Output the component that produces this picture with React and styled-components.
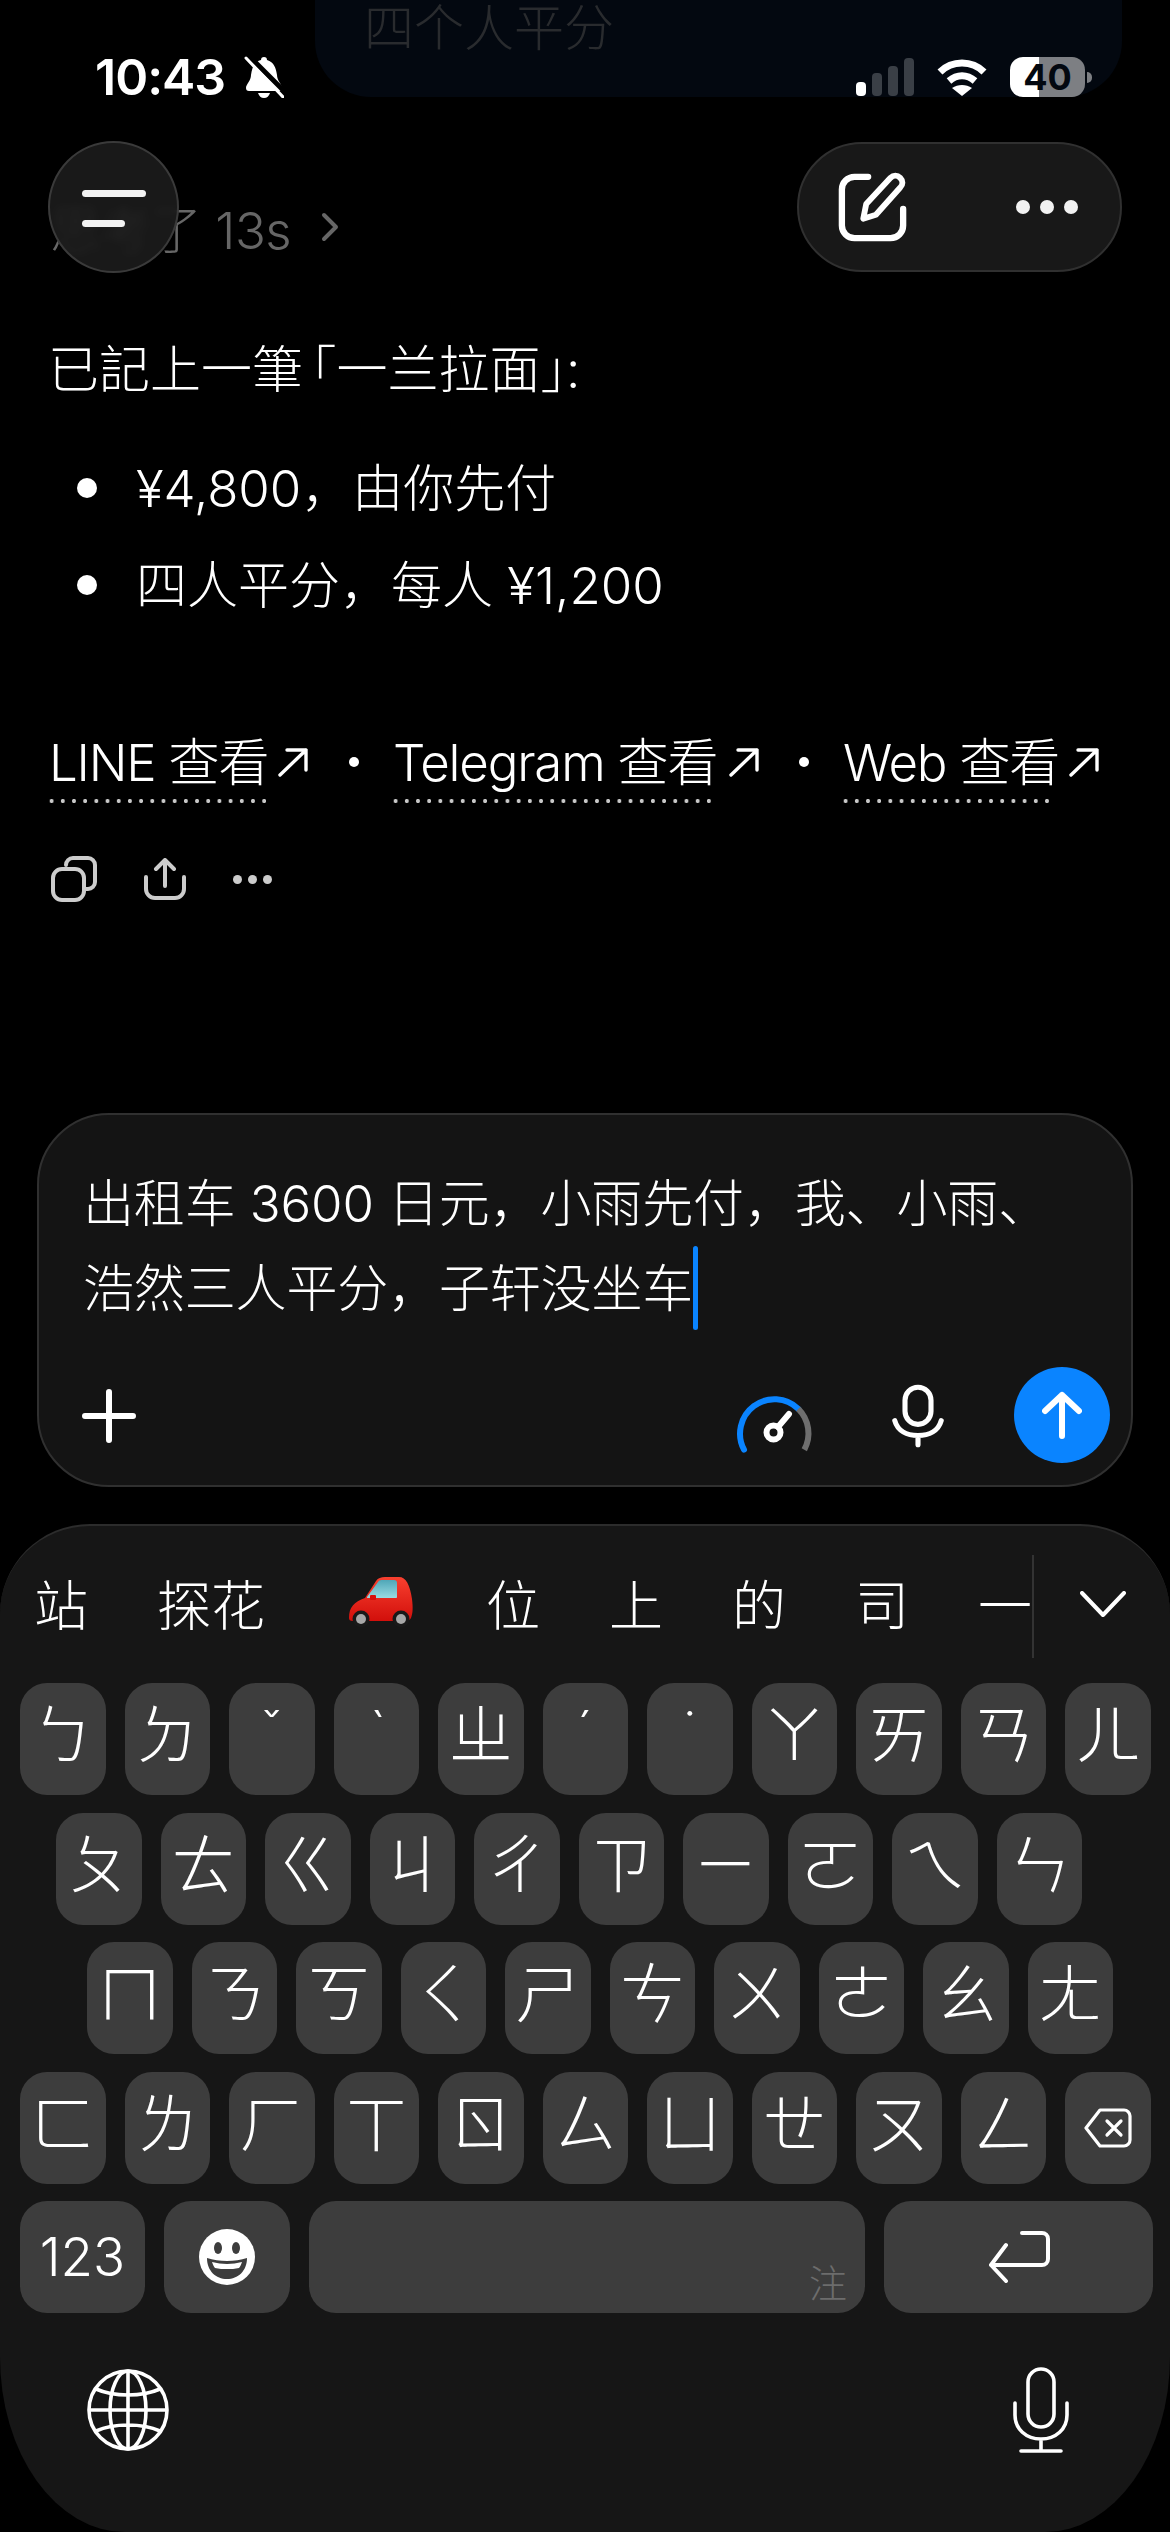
import React from "react";
import styled, { createGlobalStyle } from "styled-components";

const GlobalStyle = createGlobalStyle`
html, body { margin:0; padding:0; background:#000; }
* { box-sizing:border-box; }
`;

const sans = `Inter, "Noto Sans CJK SC", "Noto Sans CJK TC", sans-serif`;

const Page = styled.div`
position:relative;
width:1170px;
height:2532px;
overflow:hidden;
display:flex;
flex-direction:column;
background:#000;
color:#fff;
font-family:${sans};
font-weight:300;
`;

const PeekBubble = styled.div`
position:absolute;
top:0;
left:315px;
width:807px;
height:97px;
padding-left:49px;
background:#030810;
border-radius:0 0 56px 56px;
color:#292b2e;
font-size:50px;
line-height:56px;
`;

const StatusBar = styled.div`
position:absolute;
top:57px;
left:95px;
right:85px;
height:40px;
display:flex;
align-items:center;
`;

const Time = styled.span`
font-size:50px;
font-weight:600;
letter-spacing:-1px;
line-height:40px;
margin-right:19px;
`;

const StatusRight = styled.div`
margin-left:auto;
display:flex;
align-items:center;
gap:23px;
`;

const Battery = styled.div`
position:relative;
width:75px;
height:40px;
border-radius:13px;
background:linear-gradient(90deg,#fff 39%,#7d7f83 39%);
color:#030810;
font-size:36px;
font-weight:700;
line-height:40px;
text-align:center;
&::after {
  content:"";
  position:absolute;
  right:-7px;
  top:15px;
  width:5px;
  height:11px;
  border-radius:0 5px 5px 0;
  background:#7d7f83;
}
`;

const TopBar = styled.div`
position:absolute;
top:141px;
left:48px;
right:48px;
display:flex;
justify-content:space-between;
align-items:flex-start;
`;

const MenuButton = styled.div`
width:131px;
height:132px;
border-radius:50%;
padding:47px 0 0 32px;
background:rgba(28,28,28,.88);
border:2px solid #3a3a3a;
backdrop-filter:blur(4px);
display:flex;
flex-direction:column;
gap:23px;
`;

const MenuLine = styled.span`
display:block;
width:${p => p.$w}px;
height:7px;
border-radius:4px;
background:#f2f2f2;
`;

const ActionPill = styled.div`
width:325px;
height:130px;
margin-top:1px;
border-radius:65px;
padding:0 42px 0 39px;
background:#181818;
border:2px solid #303030;
display:flex;
align-items:center;
justify-content:space-between;
`;

const Chat = styled.main`
flex:1;
padding:197px 50px 0;
font-size:51px;
`;

const Thought = styled.div`
height:60px;
display:flex;
align-items:center;
gap:30px;
color:#666;
font-size:51px;
letter-spacing:-.5px;
`;

const Para = styled.p`
margin:73px 0 0 -2px;
line-height:80px;
`;

const Bracket = styled.span`
font-feature-settings:"halt";
margin-left:${p => p.$left || 0}px;
`;

const List = styled.ul`
list-style:none;
margin:30px 0 0;
padding:0 0 0 86px;
`;

const Item = styled.li`
position:relative;
height:97px;
line-height:97px;
&::before {
  content:"";
  position:absolute;
  left:-59px;
  top:38px;
  width:20px;
  height:20px;
  border-radius:50%;
  background:#fff;
}
`;

const Links = styled.div`
margin:94px 0 0 -4px;
height:76px;
display:flex;
align-items:flex-start;
`;

const LinkLabel = styled.span`
flex:none;
height:76px;
padding:0 0 0 3px;
line-height:70px;
letter-spacing:-1.2px;
white-space:nowrap;
width:${p => p.$w}px;
background-image:radial-gradient(circle,#c8c8c8 1.8px,transparent 2.3px);
background-size:11.2px 6px;
background-position:left bottom;
background-repeat:repeat-x;
`;

const LinkArrow = styled.svg`
width:30px;
height:30px;
margin:19px 0 0 ${p => p.$left}px;
flex:none;
`;

const LinkDot = styled.span`
flex:none;
width:10px;
height:10px;
margin:29px ${p => p.$right}px 0 ${p => p.$left}px;
border-radius:50%;
background:#fff;
`;

const Actions = styled.div`
margin-top:52px;
padding-left:1px;
height:46px;
display:flex;
align-items:center;
gap:47px;
`;

const Composer = styled.section`
margin:0 37px;
height:374px;
flex:none;
padding:46px 21px 22px 44px;
background:#141414;
border:2px solid #303030;
border-radius:72px;
display:flex;
flex-direction:column;
`;

const Draft = styled.div`
flex:1;
font-size:51px;
letter-spacing:-.15px;
line-height:85px;
white-space:nowrap;
`;

const Caret = styled.span`
display:inline-block;
width:5px;
height:84px;
vertical-align:top;
background:#0a84ff;
border-radius:3px;
`;

const Tools = styled.div`
height:96px;
display:flex;
align-items:center;
`;

const Send = styled.div`
width:96px;
height:96px;
border-radius:50%;
background:#0a84ff;
display:flex;
align-items:center;
justify-content:center;
`;

const Keyboard = styled.section`
margin-top:37px;
height:1008px;
flex:none;
background:#161616;
border-top:2px solid #2c2c2c;
border-radius:90px 90px 125px 125px / 90px 90px 175px 175px;
display:flex;
flex-direction:column;
`;

const CandidateBar = styled.div`
height:157px;
padding:29px 0 0 34px;
display:flex;
align-items:flex-start;
`;

const Candidates = styled.div`
width:1000px;
height:103px;
padding-bottom:8px;
display:flex;
align-items:center;
gap:69px;
font-size:54px;
white-space:nowrap;
border-right:2px solid #333;
`;

const Collapse = styled.svg`
margin:36px 0 0 46px;
flex:none;
`;

const KeyRows = styled.div`
display:flex;
flex-direction:column;
gap:17.5px;
`;

const KeyRow = styled.div`
padding-left:${p => p.$inset}px;
display:flex;
gap:19px;
`;

const Key = styled.div`
width:${p => p.$w || 85.5}px;
height:112px;
flex:none;
border-radius:27px;
background:#3d3d3d;
display:flex;
align-items:center;
justify-content:center;
font-size:${p => p.$size || 64}px;
line-height:100px;
padding-bottom:${p => (p.$flat ? 0 : 8)}px;
`;

const ToneKey = styled(Key)`
align-items:flex-start;
padding-bottom:0;
font-size:50px;
line-height:94px;
`;

const SpaceKey = styled(Key)`
justify-content:flex-end;
align-items:flex-end;
padding:0 18px 8px 0;
color:#6c6c6c;
font-size:38px;
line-height:44px;
`;

const BottomRow = styled.div`
margin-top:54px;
padding:0 101px 0 87px;
display:flex;
justify-content:space-between;
align-items:center;
`;

const row1 = ["ㄅ", "ㄉ", "ˇ", "ˋ", "ㄓ", "ˊ", "˙", "ㄚ", "ㄞ", "ㄢ", "ㄦ"];
const row2 = ["ㄆ", "ㄊ", "ㄍ", "ㄐ", "ㄔ", "ㄗ", "ㄧ", "ㄛ", "ㄟ", "ㄣ"];
const row3 = ["ㄇ", "ㄋ", "ㄎ", "ㄑ", "ㄕ", "ㄘ", "ㄨ", "ㄜ", "ㄠ", "ㄤ"];
const row4 = ["ㄈ", "ㄌ", "ㄏ", "ㄒ", "ㄖ", "ㄙ", "ㄩ", "ㄝ", "ㄡ", "ㄥ"];
const tones = ["ˇ", "ˋ", "ˊ", "˙"];

const line = { fill: "none", stroke: "#fff", strokeLinecap: "round", strokeLinejoin: "round" };

const BellSlash = () => (
  <svg width="40" height="42" viewBox="0 0 40 42">
    <path fill="#fff" d="M20 1c2 0 3 1 3 3 7 2 9 8 10 15 0 6 5 9 5 13 0 2-1 3-3 3H5c-2 0-3-1-3-3 0-4 5-7 5-13 1-7 3-13 10-15 0-2 1-3 3-3z" />
    <path fill="#fff" d="M14 37h12c-1 3-3 5-6 5s-5-2-6-5z" />
    <path stroke="#000" strokeWidth="5" d="M4 -1 L42 37" />
    <path stroke="#fff" strokeWidth="3" strokeLinecap="round" d="M2 2 L39 41" />
  </svg>
);

const Signal = () => (
  <svg width="58" height="38" viewBox="0 0 58 38">
    <rect x="0" y="24" width="10" height="14" rx="4" fill="#fff" />
    <rect x="16" y="15" width="10" height="23" rx="4" fill="#3a3f46" />
    <rect x="32" y="8" width="10" height="30" rx="4" fill="#3a3f46" />
    <rect x="48" y="0" width="10" height="38" rx="4" fill="#3a3f46" />
  </svg>
);

const Wifi = () => (
  <svg width="50" height="37" viewBox="0 0 50 37">
    <path fill="none" stroke="#fff" strokeWidth="7" d="M3 13C15 1 35 1 47 13" />
    <path fill="none" stroke="#fff" strokeWidth="7" d="M12 22c8-7 18-7 26 0" />
    <path fill="#fff" d="M15 29c6-4 14-4 20 0L25 37z" />
  </svg>
);

const ComposeIcon = () => (
  <svg width="70" height="70" viewBox="0 0 72 72">
    <path {...line} strokeWidth="6.5" d="M31 5H17A13 13 0 0 0 4 18v37a13 13 0 0 0 13 13h37a13 13 0 0 0 13-13V38" />
    <path {...line} strokeWidth="6" d="M26 48l3-15L54 6c3-3 7-3 10 0s3 7 0 10L39 44z" />
  </svg>
);

const MoreDots = ({ r, gap, fill }) => (
  <svg width={r * 2 + gap * 2} height={r * 2} viewBox={`0 0 ${r * 2 + gap * 2} ${r * 2}`}>
    <circle cx={r} cy={r} r={r} fill={fill} />
    <circle cx={r + gap} cy={r} r={r} fill={fill} />
    <circle cx={r + gap * 2} cy={r} r={r} fill={fill} />
  </svg>
);

const ThoughtChevron = () => (
  <svg width="18" height="30" viewBox="0 0 18 30">
    <path fill="none" stroke="#666" strokeWidth="4" strokeLinecap="round" strokeLinejoin="round" d="M3 3l12 12L3 27" />
  </svg>
);

const ArrowUpRight = ({ left }) => (
  <LinkArrow $left={left} viewBox="0 0 30 30">
    <path {...line} strokeWidth="3.4" d="M2 28L28 3M9 3h19v20" />
  </LinkArrow>
);

const CopyIcon = () => (
  <svg width="46" height="46" viewBox="0 0 46 46">
    <g fill="none" stroke="#ccc" strokeWidth="4" strokeLinecap="round">
      <rect x="2" y="13" width="31" height="31" rx="9" />
      <path d="M15 9V9a7 7 0 0 1 7-7h15a7 7 0 0 1 7 7v17a7 7 0 0 1-7 7h-3" />
    </g>
  </svg>
);

const ShareIcon = () => (
  <svg width="42" height="42" viewBox="0 0 42 42">
    <path fill="none" stroke="#ccc" strokeWidth="4" strokeLinecap="round" strokeLinejoin="round" d="M2 19v12a9 9 0 0 0 9 9h20a9 9 0 0 0 9-9V19M21 28V3M12 11l9-9 9 9" />
  </svg>
);

const PlusIcon = () => (
  <svg width="54" height="54" viewBox="0 0 54 54" style={{ marginLeft: -1, marginTop: 2 }}>
    <path {...line} strokeWidth="6" d="M27 3v48M3 27h48" />
  </svg>
);

const Gauge = () => (
  <svg width="100" height="80" viewBox="0 0 100 80" style={{ marginLeft: "auto", marginRight: 72, marginTop: 8 }}>
    <path fill="none" stroke="#0a84ff" strokeWidth="6" strokeLinecap="round" d="M24 70.7A34.4 34.4 0 0 1 78.3 29.9" />
    <path fill="none" stroke="#6e6e6e" strokeWidth="6" strokeLinecap="butt" d="M78.3 29.9A34.4 34.4 0 0 1 84.3 70.7" />
    <circle cx="53.5" cy="53.5" r="7" fill="none" stroke="#fff" strokeWidth="6" />
    <path {...line} strokeWidth="6" d="M58 48L69 35" />
  </svg>
);

const ComposerMic = () => (
  <svg width="52" height="66" viewBox="0 0 56 68" style={{ marginRight: 70, marginTop: 2 }}>
    <rect x="14" y="3" width="28" height="40" rx="14" fill="none" stroke="#fff" strokeWidth="5.5" />
    <path {...line} strokeWidth="5.5" d="M3 39c3 11 13 16 25 16s22-5 25-16M28 55v10" />
  </svg>
);

const SendArrow = () => (
  <svg width="40" height="48" viewBox="0 0 40 48">
    <path {...line} strokeWidth="6" d="M20 45V4M3 20L20 4l17 16" />
  </svg>
);

const CarEmoji = () => (
  <svg width="70" height="54" viewBox="8 8 70 54" style={{ marginLeft: 13, flex: "none" }}>
    <defs>
      <linearGradient id="carBody" x1="0" y1="0" x2="0" y2="1">
        <stop offset="0" stopColor="#f8402f" />
        <stop offset="1" stopColor="#d20f0b" />
      </linearGradient>
      <linearGradient id="carGlass" x1="0" y1="0" x2="0" y2="1">
        <stop offset="0" stopColor="#4fa7b8" />
        <stop offset="1" stopColor="#9adbe2" />
      </linearGradient>
    </defs>
    <path fill="url(#carBody)" d="M10 50c0-11 5-16 16-20L37 13c2-3 5-4 9-4h14c7 0 11 8 13 22 1 8 1 14-1 19-1 2-3 3-5 3H14c-3 0-4-1-4-3z" />
    <path fill="url(#carGlass)" d="M28 29L39 14c1-2 3-2 5-2h11c2 0 3 1 3 3v14c0 1-1 1-1 1H29c-1 0-1 0-1-1z" />
    <rect x="31" y="27" width="6" height="5" rx="1" fill="#d80f0b" />
    <circle cx="22" cy="51" r="8.5" fill="#191919" />
    <circle cx="22" cy="51" r="5" fill="#a8a8a8" />
    <circle cx="62" cy="51" r="8.5" fill="#191919" />
    <circle cx="62" cy="51" r="5" fill="#a8a8a8" />
  </svg>
);

const BackspaceIcon = () => (
  <svg width="48" height="40" viewBox="0 0 48 40">
    <path {...line} strokeWidth="3.2" d="M16 2h24a6 6 0 0 1 6 6v24a6 6 0 0 1-6 6H16L2 20z" />
    <path {...line} strokeWidth="3.2" d="M23 13l14 14M37 13L23 27" />
  </svg>
);

const ReturnIcon = () => (
  <svg width="62" height="52" viewBox="0 0 62 52">
    <path {...line} strokeWidth="4" d="M34 2h20a6 6 0 0 1 6 6v20a6 6 0 0 1-6 6H3M18 14L3 34l15 16" />
  </svg>
);

const EmojiIcon = () => (
  <svg width="58" height="58" viewBox="0 0 58 58">
    <circle cx="29" cy="29" r="28" fill="#fff" />
    <ellipse cx="20" cy="20" rx="4" ry="6" fill="#3d3d3d" />
    <ellipse cx="38" cy="20" rx="4" ry="6" fill="#3d3d3d" />
    <path fill="#3d3d3d" d="M9 30c6 2 13 3 20 3s14-1 20-3c0 13-9 21-20 21S9 43 9 30z" />
    <path fill="#fff" d="M14 34c5 1 10 2 15 2s10-1 15-2c-1 3-2 5-3 6-4 1-8 1-12 1s-8 0-12-1c-1-1-2-3-3-6z" />
  </svg>
);

const GlobeIcon = () => (
  <svg width="82" height="82" viewBox="0 0 82 82">
    <g fill="none" stroke="#fff" strokeWidth="3.6">
      <circle cx="41" cy="41" r="39" />
      <ellipse cx="41" cy="41" rx="18" ry="39" />
      <path d="M41 2v78M2 41h78M9 20c9 4 20 6 32 6s23-2 32-6M9 62c9-4 20-6 32-6s23 2 32 6" />
    </g>
  </svg>
);

const KeyboardMic = () => (
  <svg width="56" height="86" viewBox="0 0 56 86">
    <rect x="15" y="2" width="26" height="58" rx="13" fill="none" stroke="#fff" strokeWidth="3.6" />
    <path {...line} strokeWidth="3.6" d="M2 36v12c0 14 11 24 26 24s26-10 26-24V36M28 72v11M8 84h40" />
  </svg>
);

const Chevron = () => (
  <Collapse width="46" height="26" viewBox="0 0 46 26">
    <path {...line} strokeWidth="4" d="M2 2l21 22L44 2" />
  </Collapse>
);

const App = () => (
  <Page>
    <GlobalStyle />
    <Chat>
      <Thought>
        <span>思考了 13s</span>
        <ThoughtChevron />
      </Thought>
      <Para>
        已記上一筆<Bracket $left={8}>「</Bracket>一兰拉面<Bracket>」</Bracket>:
      </Para>
      <List>
        <Item>¥4,800，由你先付</Item>
        <Item>四人平分，每人 ¥1,200</Item>
      </List>
      <Links>
        <LinkLabel $w={223}>LINE 查看</LinkLabel>
        <ArrowUpRight left={9} />
        <LinkDot $left={41} $right={31} />
        <LinkLabel $w={326}>Telegram 查看</LinkLabel>
        <ArrowUpRight left={13} />
        <LinkDot $left={40} $right={31} />
        <LinkLabel $w={212}>Web 查看</LinkLabel>
        <ArrowUpRight left={17} />
      </Links>
      <Actions>
        <CopyIcon />
        <ShareIcon />
        <MoreDots r={4.5} gap={15} fill="#ccc" />
      </Actions>
    </Chat>

    <Composer>
      <Draft>
        出租车 3600 日元，小雨先付，我、小雨、
        <br />
        浩然三人平分，子轩没坐车
        <Caret />
      </Draft>
      <Tools>
        <PlusIcon />
        <Gauge />
        <ComposerMic />
        <Send>
          <SendArrow />
        </Send>
      </Tools>
    </Composer>

    <Keyboard>
      <CandidateBar>
        <Candidates>
          <span>站</span>
          <span>探花</span>
          <CarEmoji />
          <span>位</span>
          <span>上</span>
          <span>的</span>
          <span>司</span>
          <span>一</span>
        </Candidates>
        <Chevron />
      </CandidateBar>
      <KeyRows>
        <KeyRow $inset={20}>
          {row1.map(k =>
            tones.includes(k) ? <ToneKey key={k}>{k}</ToneKey> : <Key key={k}>{k}</Key>
          )}
        </KeyRow>
        <KeyRow $inset={56}>
          {row2.map(k => <Key key={k}>{k}</Key>)}
        </KeyRow>
        <KeyRow $inset={87}>
          {row3.map(k => <Key key={k}>{k}</Key>)}
        </KeyRow>
        <KeyRow $inset={20}>
          {row4.map(k => <Key key={k}>{k}</Key>)}
          <Key $flat>
            <BackspaceIcon />
          </Key>
        </KeyRow>
        <KeyRow $inset={20}>
          <Key $w={125} $size={53} $flat>123</Key>
          <Key $w={126} $flat>
            <EmojiIcon />
          </Key>
          <SpaceKey $w={556}>注</SpaceKey>
          <Key $w={269} $flat>
            <ReturnIcon />
          </Key>
        </KeyRow>
      </KeyRows>
      <BottomRow>
        <GlobeIcon />
        <KeyboardMic />
      </BottomRow>
    </Keyboard>

    <PeekBubble>四个人平分</PeekBubble>
    <StatusBar>
      <Time>10:43</Time>
      <BellSlash />
      <StatusRight>
        <Signal />
        <Wifi />
        <Battery>40</Battery>
      </StatusRight>
    </StatusBar>
    <TopBar>
      <MenuButton>
        <MenuLine $w={64} />
        <MenuLine $w={43} />
      </MenuButton>
      <ActionPill>
        <ComposeIcon />
        <MoreDots r={7} gap={24} fill="#f2f2f2" />
      </ActionPill>
    </TopBar>
  </Page>
);

export default App;
